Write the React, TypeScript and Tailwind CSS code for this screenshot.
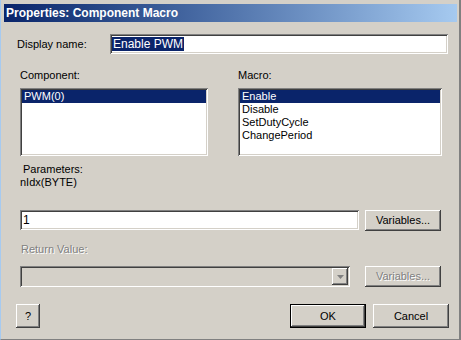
import React from "react";

const SUNKEN =
    "shadow-[inset_1px_1px_0_#808080,inset_-1px_-1px_0_#ffffff,inset_2px_2px_0_#404040,inset_-2px_-2px_0_#d4d0c8]";
const RAISED =
    "shadow-[inset_-1px_-1px_0_#404040,inset_1px_1px_0_#ffffff,inset_-2px_-2px_0_#808080,inset_2px_2px_0_#d4d0c8]";
const DISABLED_TEXT = "text-[#808080] [text-shadow:1px_1px_0_#ffffff]";

function Button({ label, className = "", disabled = false }: { label: string; className?: string; disabled?: boolean }) {
    return (
        <div
            className={`flex items-center justify-center bg-[#d4d0c8] ${RAISED} ${disabled ? DISABLED_TEXT : "text-black"} ${className}`}
        >
            {label}
        </div>
    );
}

function ListBox({ items, selected, className = "" }: { items: string[]; selected: number; className?: string }) {
    return (
        <div className={`bg-white p-[2px] h-[68px] ${SUNKEN} ${className}`}>
            {items.map((item, i) => (
                <div
                    key={item}
                    className={`h-[13px] leading-[13px] pl-[2px] ${i === selected ? "bg-[#0a246a] text-white" : "text-black"}`}
                >
                    {item}
                </div>
            ))}
        </div>
    );
}

export default function App() {
    return (
        <div className="w-[461px] h-[340px] bg-[#d4d0c8] border-l border-l-[#a6caf0] border-r-2 border-r-[#808080] border-b border-b-[#808080] text-[11px] text-black font-['Liberation_Sans',Arial,sans-serif] flex flex-col">
            {/* caption */}
            <div className="mt-[4px] ml-[3px] w-[453px] h-[18px] flex items-center pl-[2px] bg-gradient-to-r from-[#0a246a] to-[#a6caf0]">
                <span className="text-white font-bold text-[12px] leading-[18px]">Properties: Component Macro</span>
            </div>

            {/* display name */}
            <div className="mt-[12px] flex items-center pl-[16px]">
                <span className="w-[93px]">Display name:</span>
                <div className={`w-[338px] h-[20px] bg-white flex items-center pl-[2px] ${SUNKEN}`}>
                    <span className="bg-[#0a246a] text-white px-[1px] leading-[14px] text-[12px]">Enable PWM</span>
                </div>
            </div>

            {/* lists */}
            <div className="mt-[15px] flex pl-[19px] h-[13px] leading-[13px]">
                <span className="w-[218px]">Component:</span>
                <span>Macro:</span>
            </div>
            <div className="mt-[6px] flex pl-[19px] gap-[30px]">
                <ListBox items={["PWM(0)"]} selected={0} className="w-[188px]" />
                <ListBox items={["Enable", "Disable", "SetDutyCycle", "ChangePeriod"]} selected={0} className="w-[204px]" />
            </div>

            {/* parameters */}
            <div className="mt-[7px] pl-[22px] leading-[13px]">Parameters:</div>
            <div className="pl-[19px] leading-[13px]">nIdx(BYTE)</div>

            {/* value row */}
            <div className="mt-[21px] flex items-start pl-[19px] gap-[6px]">
                <div className={`w-[339px] h-[20px] bg-white flex items-center pl-[3px] text-[12px] ${SUNKEN}`}>1</div>
                <Button label="Variables..." className="w-[76px] h-[21px]" />
            </div>

            {/* return value */}
            <div className={`mt-[12px] pl-[20px] leading-[13px] ${DISABLED_TEXT}`}>Return Value:</div>
            <div className="mt-[10px] flex items-start pl-[19px] gap-[15px]">
                <div className={`w-[330px] h-[21px] bg-[#d4d0c8] flex justify-end items-center pr-[2px] ${SUNKEN}`}>
                    <div className={`w-[16px] h-[17px] flex items-center justify-center bg-[#d4d0c8] ${RAISED}`}>
                        <svg width="7" height="4" viewBox="0 0 7 4">
                            <path d="M0 0h7L3.5 4z" fill="#808080" />
                        </svg>
                    </div>
                </div>
                <Button label="Variables..." disabled className="w-[76px] h-[21px]" />
            </div>

            {/* buttons */}
            <div className="mt-[17px] flex items-start pl-[15px]">
                <Button label="?" className="w-[24px] h-[24px]" />
                <div className="ml-[250px] w-[76px] h-[24px] border border-black">
                    <Button label="OK" className="w-full h-full" />
                </div>
                <Button label="Cancel" className="ml-[7px] w-[76px] h-[24px]" />
            </div>
        </div>
    );
}
